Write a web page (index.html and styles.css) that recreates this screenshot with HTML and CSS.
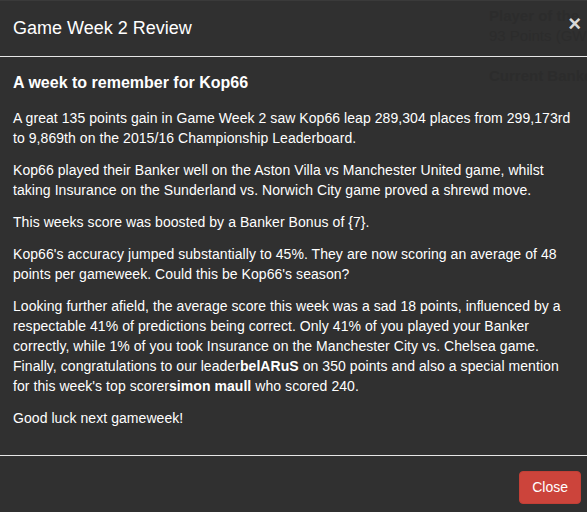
FILE: index.html
```html
<!DOCTYPE html>
<html>
<head>
<meta charset="utf-8">
<link rel="stylesheet" href="styles.css">
</head>
<body>
<div class="backdrop-ghost" aria-hidden="true">
  <div class="ghost ghost-1">Player of the</div>
  <div class="ghost ghost-2">93 Points (GW</div>
  <div class="ghost ghost-3">Current Banke</div>
</div>
<div class="modal">
  <div class="modal-header">
    <h3 class="modal-title">Game Week 2 Review</h3>
    <span class="close">&times;</span>
  </div>
  <div class="modal-body">
    <h4 class="headline">A week to remember for Kop66</h4>
    <p>A great 135 points gain in Game Week 2 saw Kop66 leap 289,304 places from 299,173rd<br>to 9,869th on the 2015/16 Championship Leaderboard.</p>
    <p>Kop66 played their Banker well on the Aston Villa vs Manchester United game, whilst<br>taking Insurance on the Sunderland vs. Norwich City game proved a shrewd move.</p>
    <p>This weeks score was boosted by a Banker Bonus of {7}.</p>
    <p>Kop66's accuracy jumped substantially to 45%. They are now scoring an average of 48<br>points per gameweek. Could this be Kop66's season?</p>
    <p>Looking further afield, the average score this week was a sad 18 points, influenced by a<br>respectable 41% of predictions being correct. Only 41% of you played your Banker<br>correctly, while 1% of you took Insurance on the Manchester City vs. Chelsea game.<br>Finally, congratulations to our leader<b>belARuS</b> on 350 points and also a special mention<br>for this week's top scorer<b>simon maull</b> who scored 240.</p>
    <p>Good luck next gameweek!</p>
  </div>
  <div class="modal-footer">
    <button class="btn-close">Close</button>
  </div>
</div>
</body>
</html>
```
FILE: styles.css
```css
html, body {
  margin: 0;
  padding: 0;
  background: #303030;
}
body {
  font-family: "Liberation Sans", Arial, sans-serif;
  color: #fff;
  width: 587px;
  height: 512px;
  overflow: hidden;
  position: relative;
}
.backdrop-ghost {
  position: absolute;
  left: 489px;
  top: 0;
  width: 98px;
  height: 100px;
  overflow: hidden;
}
.ghost {
  position: absolute;
  left: 0;
  white-space: nowrap;
  color: #2c2c2c;
  font-size: 15px;
  font-weight: bold;
}
.ghost-1 { top: 7px; }
.ghost-2 { top: 27px; font-weight: normal; }
.ghost-3 { top: 67px; }
.modal {
  position: relative;
  display: flex;
  flex-direction: column;
  border-top: 1px solid #3a3a3a;
}
.modal-header {
  display: flex;
  justify-content: space-between;
  align-items: flex-start;
  padding: 14px 6px 15px 13px;
  border-bottom: 1px solid #e6e6e6;
}
.modal-title {
  margin: 0;
  font-size: 18px;
  font-weight: normal;
  line-height: 26px;
}
.close {
  font-size: 22px;
  font-weight: bold;
  line-height: 1;
  color: #d8d8d8;
  margin-top: -2px;
}
.modal-body {
  padding: 17px 6px 15px 13px;
}
.headline {
  margin: 0 0 16px;
  font-size: 16px;
  font-weight: bold;
  line-height: 18px;
}
.modal-body p {
  margin: 0 0 12px;
  font-size: 14px;
  line-height: 20px;
  letter-spacing: 0.06px;
  white-space: nowrap;
}
.modal-footer {
  display: flex;
  justify-content: flex-end;
  padding: 15px 6px 15px 13px;
  border-top: 1px solid #e6e6e6;
}
.btn-close {
  font-family: "Liberation Sans", Arial, sans-serif;
  font-size: 14px;
  line-height: 19px;
  padding: 6px 12px;
  color: #fff;
  background: #cc443b;
  border: 1px solid #c23f36;
  border-radius: 4px;
}
```
